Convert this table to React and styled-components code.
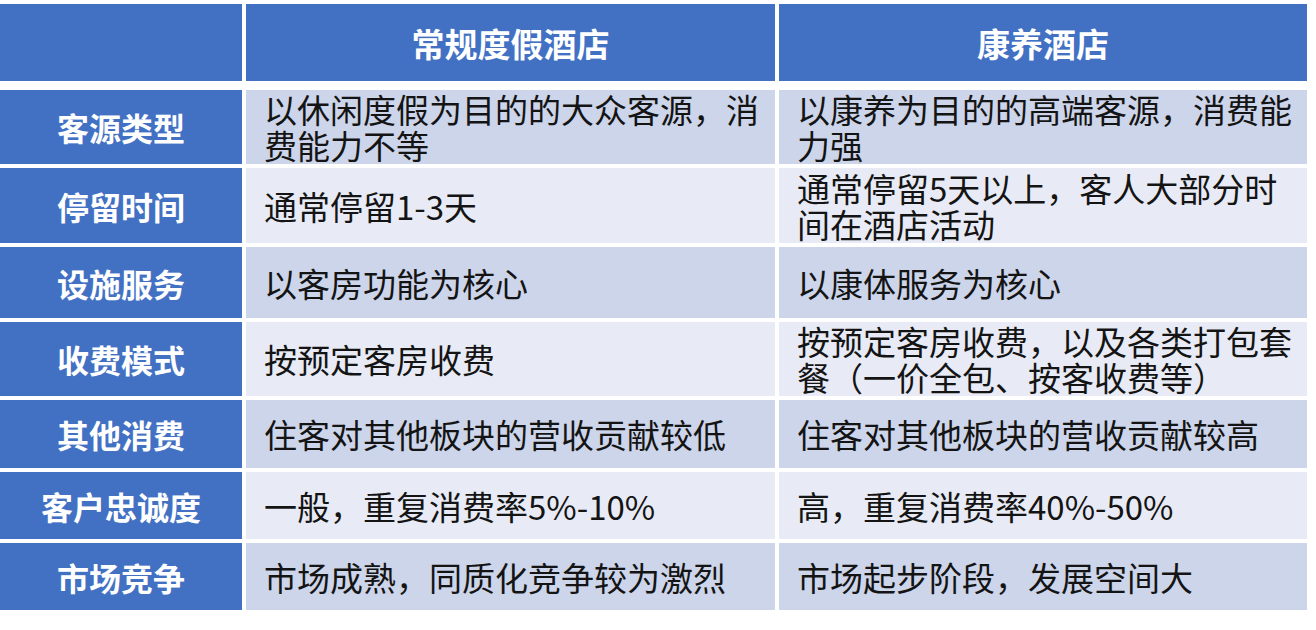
import { createGlobalStyle } from 'styled-components';
import styled from 'styled-components';

const GlobalStyle = createGlobalStyle`
    html, body {
        margin: 0;
        padding: 0;
        background: #ffffff;
    }
    body {
        font-family: "Noto Sans CJK SC", "Noto Sans", sans-serif;
    }
`;

const rows = [
    { label: '客源类型', a: '以休闲度假为目的的大众客源，消费能力不等', b: '以康养为目的的高端客源，消费能力强', h: 74 },
    { label: '停留时间', a: '通常停留1-3天', b: '通常停留5天以上，客人大部分时间在酒店活动', h: 75 },
    { label: '设施服务', a: '以客房功能为核心', b: '以康体服务为核心', h: 71 },
    { label: '收费模式', a: '按预定客房收费', b: '按预定客房收费，以及各类打包套餐（一价全包、按客收费等）', h: 74 },
    { label: '其他消费', a: '住客对其他板块的营收贡献较低', b: '住客对其他板块的营收贡献较高', h: 68 },
    { label: '客户忠诚度', a: '一般，重复消费率5%-10%', b: '高，重复消费率40%-50%', h: 67 },
    { label: '市场竞争', a: '市场成熟，同质化竞争较为激烈', b: '市场起步阶段，发展空间大', h: 67 },
];

export default function App() {
    return (
        <Page>
            <GlobalStyle />
            <Table>
                <Row height={77} header>
                    <HeadCell />
                    <HeadCell>常规度假酒店</HeadCell>
                    <HeadCell>康养酒店</HeadCell>
                </Row>
                {rows.map((row, index) => (
                    <Row key={row.label} height={row.h}>
                        <LabelCell>{row.label}</LabelCell>
                        <DataCell shade={index % 2 === 0}>{row.a}</DataCell>
                        <DataCell shade={index % 2 === 0}>{row.b}</DataCell>
                    </Row>
                ))}
            </Table>
        </Page>
    )
}

const Page = styled.div`
    width: 1316px;
    height: 630px;
    background: #ffffff;
    padding-top: 4px;
    box-sizing: border-box;
`;

const Table = styled.div`
    display: flex;
    flex-direction: column;
    gap: 4px;
    width: 1307px;
`;

const Row = styled.div`
    display: grid;
    grid-template-columns: 242px 529px 528px;
    column-gap: 4px;
    height: ${p => p.height}px;
    margin-bottom: ${p => p.header ? 5 : 0}px;
`;

const HeadCell = styled.div`
    background: #4271c4;
    color: #ffffff;
    font-weight: 700;
    font-size: 33px;
    display: flex;
    align-items: center;
    justify-content: center;
`;

const LabelCell = styled.div`
    background: #4271c4;
    color: #ffffff;
    font-weight: 700;
    font-size: 32px;
    display: flex;
    align-items: center;
    justify-content: center;
`;

const DataCell = styled.div`
    background: ${p => p.shade ? '#cdd5ea' : '#e8ebf5'};
    color: #141414;
    font-size: 33px;
    line-height: 36px;
    padding: 0 8px 0 18px;
    display: flex;
    align-items: center;
`;
